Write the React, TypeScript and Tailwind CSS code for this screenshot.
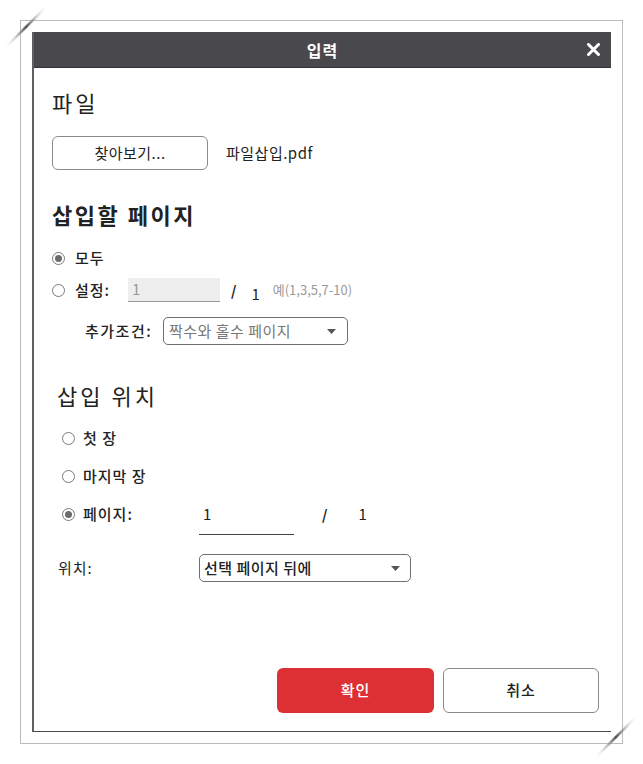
import React from 'react';

const font = { fontFamily: '"Noto Sans CJK KR", "Liberation Sans", sans-serif' };

function Radio({ checked }: { checked?: boolean }) {
  return (
    <span className="flex h-[13px] w-[13px] shrink-0 items-center justify-center rounded-full border border-[#7a7a7a] bg-white">
      {checked && <span className="h-[7px] w-[7px] rounded-full bg-[#6b6b6b]" />}
    </span>
  );
}

function Caret() {
  return (
    <svg width="9" height="5" viewBox="0 0 9 5" className="shrink-0">
      <path d="M0 0 L9 0 L4.5 5 Z" fill="#555" />
    </svg>
  );
}

function Corner({ flip }: { flip?: boolean }) {
  const id = flip ? 'gb' : 'ga';
  return (
    <svg width="50" height="50" viewBox="0 0 50 50">
      <defs>
        <linearGradient id={id} x1="0" y1="1" x2="1" y2="0">
          <stop offset="0" stopColor="#fff" stopOpacity="0" />
          <stop offset="0.5" stopColor="#555" />
          <stop offset="1" stopColor="#fff" stopOpacity="0" />
        </linearGradient>
      </defs>
      <path d="M3 47 L47 3" stroke={`url(#${id})`} strokeWidth="2.5" strokeLinecap="round" />
    </svg>
  );
}

export default function App() {
  return (
    <div className="relative h-[764px] w-[643px] bg-white pl-[20px] pt-[20px] text-[#222]" style={font}>
      <div className="pointer-events-none absolute left-[1px] top-[2px]">
        <Corner />
      </div>
      <div className="pointer-events-none absolute left-[591px] top-[712px]">
        <Corner flip />
      </div>

      <div className="h-[724px] w-[603px] border border-[#bcbcbc] p-[11px]">
        <div className="flex h-full w-full flex-col border-b border-l-2 border-b-[#4a4a4a] border-l-[#5f5f64] bg-white">
          {/* header */}
          <div className="relative flex h-[36px] shrink-0 items-center justify-center border-b border-[#333] bg-[#48484d]">
            <span className="text-[16px] font-bold tracking-[1px] text-white">입력</span>
            <svg width="13" height="13" viewBox="0 0 13 13" className="absolute right-[11px] top-[11px]">
              <path d="M1.5 1.5 L11.5 11.5 M11.5 1.5 L1.5 11.5" stroke="#fff" strokeWidth="3" strokeLinecap="round" />
            </svg>
          </div>

          <div className="flex flex-col px-[18px]">
            {/* 파일 */}
            <div className="mt-[18px] flex h-[32px] items-center text-[22px] tracking-[3px]">파일</div>
            <div className="mt-[18px] flex h-[34px] items-center">
              <button className="flex h-[34px] w-[156px] items-center justify-center rounded-[6px] border border-[#8a8a8a] bg-white text-[15px] tracking-[0.5px]">
                찾아보기...
              </button>
              <span className="ml-[18px] text-[15px] tracking-[0.5px]">파일삽입.pdf</span>
            </div>

            {/* 삽입할 페이지 */}
            <div className="mt-[28px] flex h-[32px] items-center text-[22px] font-bold tracking-[2.5px]">삽입할 페이지</div>
            <div className="mt-[18px] flex h-[20px] items-center">
              <Radio checked />
              <span className="ml-[10px] text-[15px] font-medium tracking-[1px]">모두</span>
            </div>
            <div className="mt-[10px] flex h-[24px] items-center">
              <Radio />
              <span className="ml-[10px] w-[53px] text-[15px] font-medium tracking-[1px]">설정:</span>
              <div className="flex h-[24px] w-[92px] items-center border-b border-[#9a9a9a] bg-[#eeeeee] pl-[4px] text-[15px] text-[#999]">
                1
              </div>
              <span className="ml-[11px] text-[14px] font-semibold">/</span>
              <span className="ml-[15px] mt-[8px] text-[15px]">1</span>
              <span className="ml-[13px] text-[13px] text-[#9a9a9a]">예(1,3,5,7-10)</span>
            </div>
            <div className="mt-[15px] flex h-[28px] items-center">
              <span className="ml-[33px] w-[78px] text-[15px] font-medium tracking-[1.5px]">추가조건:</span>
              <div className="flex h-[28px] w-[185px] items-center justify-between rounded-[5px] border border-[#6f6f6f] pl-[5px] pr-[11px] text-[15px] tracking-[0.5px] text-[#777]">
                <span>짝수와 홀수 페이지</span>
                <Caret />
              </div>
            </div>

            {/* 삽입 위치 */}
            <div className="ml-[5px] mt-[34px] flex h-[32px] items-center text-[22px] tracking-[3px]">삽입 위치</div>
            <div className="ml-[10px] mt-[17px] flex h-[20px] items-center">
              <Radio />
              <span className="ml-[8px] text-[15px] font-medium tracking-[1px]">첫 장</span>
            </div>
            <div className="ml-[10px] mt-[18px] flex h-[20px] items-center">
              <Radio />
              <span className="ml-[8px] text-[15px] font-medium tracking-[1px]">마지막 장</span>
            </div>
            <div className="ml-[10px] mt-[16px] flex h-[33px] items-start">
              <div className="flex h-[24px] items-center">
                <Radio checked />
                <span className="ml-[8px] w-[116px] text-[15px] font-medium tracking-[1px]">페이지:</span>
              </div>
              <div className="flex h-[33px] w-[95px] items-start border-b border-[#444]">
                <span className="flex h-[24px] items-center pl-[4px] text-[15px]">1</span>
              </div>
              <span className="ml-[28px] flex h-[24px] items-center text-[14px] font-semibold">/</span>
              <span className="ml-[31px] flex h-[24px] items-center text-[15px]">1</span>
            </div>
            <div className="mt-[19px] flex h-[28px] items-center">
              <span className="ml-[6px] w-[141px] text-[15px] tracking-[1px]">위치:</span>
              <div className="flex h-[28px] w-[212px] items-center justify-between rounded-[5px] border border-[#6f6f6f] pl-[4px] pr-[10px] text-[15px] font-medium tracking-[0.5px] text-[#222]">
                <span>선택 페이지 뒤에</span>
                <Caret />
              </div>
            </div>
          </div>

          {/* buttons */}
          <div className="mt-auto flex justify-end gap-[9px] pb-[18px] pr-[12px]">
            <button className="flex h-[45px] w-[157px] items-center justify-center rounded-[6px] bg-[#dd3035] text-[15px] font-medium tracking-[1px] text-white">
              확인
            </button>
            <button className="flex h-[45px] w-[156px] items-center justify-center rounded-[6px] border-[1.5px] border-[#8a8a8a] bg-white text-[15px] font-medium tracking-[1px] text-[#222]">
              취소
            </button>
          </div>
        </div>
      </div>
    </div>
  );
}
